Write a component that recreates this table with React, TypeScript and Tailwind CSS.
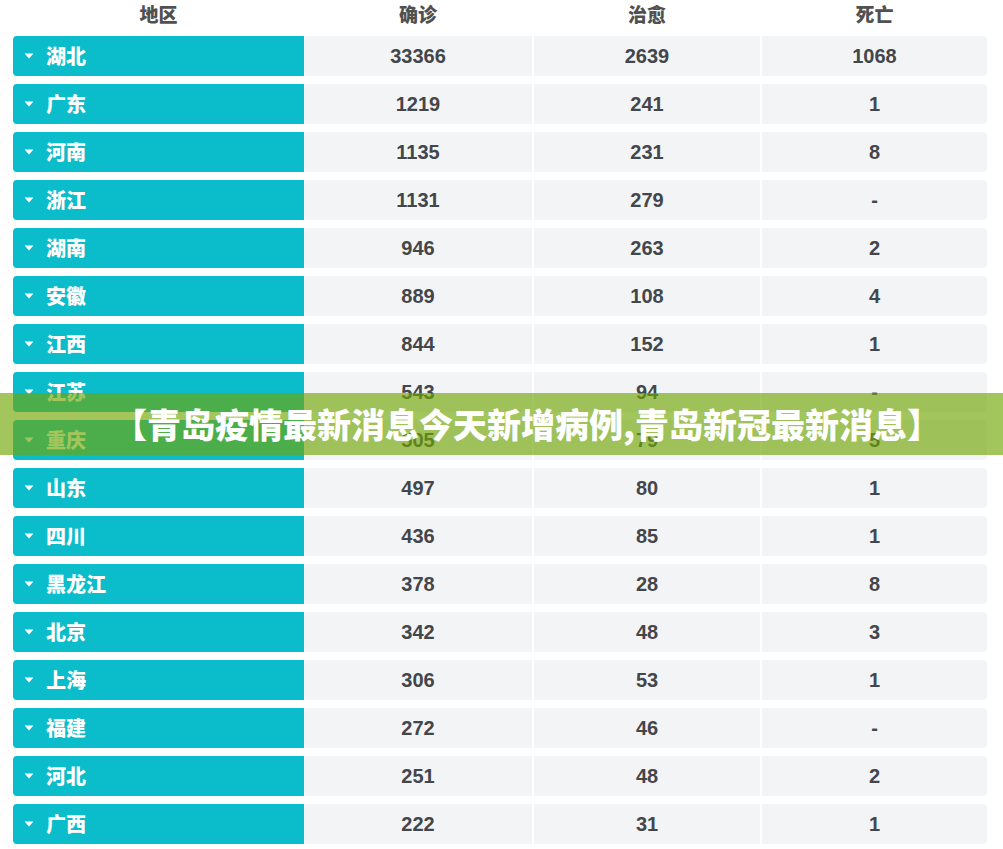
import React from "react";

const rows: [string, string, string, string][] = [
  ["湖北", "33366", "2639", "1068"],
  ["广东", "1219", "241", "1"],
  ["河南", "1135", "231", "8"],
  ["浙江", "1131", "279", "-"],
  ["湖南", "946", "263", "2"],
  ["安徽", "889", "108", "4"],
  ["江西", "844", "152", "1"],
  ["江苏", "543", "94", "-"],
  ["重庆", "505", "79", "5"],
  ["山东", "497", "80", "1"],
  ["四川", "436", "85", "1"],
  ["黑龙江", "378", "28", "8"],
  ["北京", "342", "48", "3"],
  ["上海", "306", "53", "1"],
  ["福建", "272", "46", "-"],
  ["河北", "251", "48", "2"],
  ["广西", "222", "31", "1"],
];

const font = { fontFamily: '"Liberation Sans", "Noto Sans CJK SC", sans-serif' };
const cjk = { fontFamily: '"Noto Sans CJK SC", sans-serif' };

function Caret() {
  return (
    <svg width="10" height="6" viewBox="0 0 10 6" className="shrink-0">
      <path d="M0.5 0.5 L9.5 0.5 L5 5.5 Z" fill="#ffffff" />
    </svg>
  );
}

export default function App() {
  return (
    <div className="relative w-[1003px] h-[849px] bg-white overflow-hidden" style={font}>
      <div className="flex flex-col gap-2 pl-[13px]">
        {/* header */}
        <div className="flex h-[28px] items-center text-[19px] font-black text-[#505050]" style={cjk}>
          <div className="w-[291px] text-center">地区</div>
          <div className="w-[228px] text-center">确诊</div>
          <div className="w-[226px] ml-[2px] text-center">治愈</div>
          <div className="w-[225px] ml-[2px] text-center">死亡</div>
        </div>

        {rows.map(([area, confirmed, cured, dead]) => (
          <div key={area} className="flex h-[40px] text-[20px] font-bold">
            <div className="w-[291px] flex items-center gap-[12px] pl-[11px] bg-[#0bbcca] rounded-l-[4px] text-white">
              <Caret />
              <span className="font-black" style={cjk}>{area}</span>
            </div>
            <div className="w-[228px] flex items-center justify-center bg-[#f3f4f6] text-[#43464b]">{confirmed}</div>
            <div className="w-[226px] ml-[2px] flex items-center justify-center bg-[#f3f4f6] text-[#43464b]">{cured}</div>
            <div className="w-[225px] ml-[2px] flex items-center justify-center bg-[#f3f4f6] text-[#43464b] rounded-r-[4px]">{dead}</div>
          </div>
        ))}
      </div>

      {/* title banner */}
      <div className="absolute left-0 right-0 top-[393px] h-[62px] bg-[#70a605]/65 flex items-center pl-[113px]">
        <span className="text-white text-[34px] font-black leading-none" style={cjk}>
          【青岛疫情最新消息今天新增病例,青岛新冠最新消息】
        </span>
      </div>
    </div>
  );
}
